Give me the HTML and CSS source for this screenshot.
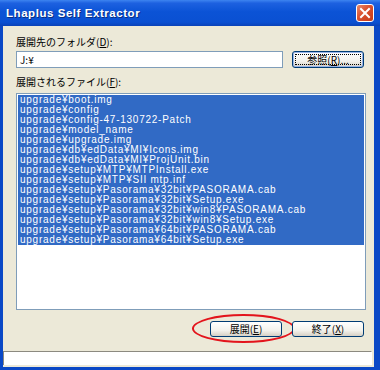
FILE: index.html
```
<!DOCTYPE html>
<html lang="ja">
<head>
    <meta charset="UTF-8">
    <title>Lhaplus Self Extractor</title>
    <link rel="stylesheet" href="styles.css">
</head>
<body>
    <div class="window">
        <div class="titlebar">
            <span class="title">Lhaplus Self Extractor</span>
            <div class="close">
                <svg width="12" height="12" viewBox="0 0 12 12">
                    <path d="M2 2 L10 10 M10 2 L2 10" stroke="#fff" stroke-width="2" stroke-linecap="square"/>
                </svg>
            </div>
        </div>
        <div class="client">
            <p class="label">展開先のフォルダ(<u>D</u>):</p>
            <div class="folder_row">
                <div class="textbox">J:¥</div>
                <div class="btn btn_default">参照(<u>R</u>)...</div>
            </div>
            <p class="label label2">展開されるファイル(<u>F</u>):</p>
            <div class="listbox">
                <ul>
                    <li>upgrade¥boot.img</li>
                    <li>upgrade¥config</li>
                    <li>upgrade¥config-47-130722-Patch</li>
                    <li>upgrade¥model_name</li>
                    <li>upgrade¥upgrade.img</li>
                    <li>upgrade¥db¥edData¥MI¥Icons.img</li>
                    <li>upgrade¥db¥edData¥MI¥ProjUnit.bin</li>
                    <li>upgrade¥setup¥MTP¥MTPInstall.exe</li>
                    <li>upgrade¥setup¥MTP¥SII mtp.inf</li>
                    <li>upgrade¥setup¥Pasorama¥32bit¥PASORAMA.cab</li>
                    <li>upgrade¥setup¥Pasorama¥32bit¥Setup.exe</li>
                    <li>upgrade¥setup¥Pasorama¥32bit¥win8¥PASORAMA.cab</li>
                    <li>upgrade¥setup¥Pasorama¥32bit¥win8¥Setup.exe</li>
                    <li>upgrade¥setup¥Pasorama¥64bit¥PASORAMA.cab</li>
                    <li>upgrade¥setup¥Pasorama¥64bit¥Setup.exe</li>
                </ul>
            </div>
            <div class="btn_row">
                <div class="btn btn_extract">展開(<u>E</u>)
                    <span class="mark"></span>
                </div>
                <div class="btn">終了(<u>X</u>)</div>
            </div>
            <div class="statusbar"></div>
        </div>
    </div>
</body>
</html>
```

FILE: styles.css
```
* {
    padding: 0;
    margin: 0;
    box-sizing: border-box;
}
body {
    width: 380px;
    height: 370px;
    overflow: hidden;
    font-family: "Noto Sans CJK JP", "Liberation Sans", sans-serif;
    font-size: 10px;
    color: #000;
}

.window {
    width: 380px;
    height: 370px;
    background: #0a48c6;
    display: flex;
    flex-direction: column;
}

.titlebar {
    height: 26px;
    display: flex;
    justify-content: space-between;
    align-items: center;
    padding: 0 6px 0 6px;
    background: linear-gradient(#3d84f0 0%, #1d61e0 12%, #0b53d6 45%, #0a50d2 85%, #0a42b8 100%);
}
.titlebar .title {
    font-family: "Liberation Sans", sans-serif;
    font-weight: bold;
    font-size: 11.5px;
    color: #fff;
    letter-spacing: 0.55px;
    text-shadow: 1px 1px 0 #0a2f80;
}
.titlebar .close {
    width: 18px;
    height: 18px;
    border: 1px solid #fff;
    border-radius: 3px;
    background: linear-gradient(135deg, #e88a6c 0%, #d9502e 45%, #c53a17 100%);
    display: flex;
    justify-content: center;
    align-items: center;
}

.client {
    flex: 1;
    margin: 0 6px 3px 3px;
    background: #ece9d8;
    padding: 0 8px 0 13px;
    display: flex;
    flex-direction: column;
}

.label {
    margin-top: 10px;
    height: 12px;
    line-height: 12px;
    font-size: 10px;
}
.label2 {
    margin-top: 8px;
}

.folder_row {
    margin-top: 3px;
    display: flex;
    height: 17px;
}
.textbox {
    width: 267px;
    height: 17px;
    background: #fff;
    border: 1px solid #7f9db9;
    padding-left: 3px;
    line-height: 15px;
    font-size: 10px;
}

.btn {
    width: 72px;
    height: 16px;
    border: 1px solid #003c74;
    border-radius: 3px;
    background: linear-gradient(#fff 0%, #f3f2ec 60%, #d6d0c5 100%);
    text-align: center;
    line-height: 14px;
    font-size: 10px;
    position: relative;
}
.btn_default {
    height: 17px;
    margin-left: 9px;
    line-height: 15px;
    box-shadow: inset 0 0 0 1px #98b4e8;
    outline: 1px dotted #000;
    outline-offset: -4px;
}

.listbox {
    margin-top: 5px;
    height: 217px;
    border: 1px solid #7f9db9;
    background: #fff;
    padding: 1px 1px 0 1px;
}
.listbox ul {
    list-style: none;
}
.listbox li {
    height: 10px;
    line-height: 10px;
    background: #316ac5;
    color: #fff;
    padding-left: 2px;
    font-family: "Liberation Sans", "Noto Sans CJK JP", sans-serif;
    font-size: 10px;
    letter-spacing: 0.75px;
    white-space: nowrap;
    overflow: hidden;
}

.btn_row {
    margin-top: 11px;
    display: flex;
    justify-content: flex-end;
    gap: 10px;
    padding-right: 2px;
}
.btn_extract .mark {
    position: absolute;
    left: -19px;
    top: -8px;
    width: 103px;
    height: 29px;
    border: 2px solid #e3141c;
    border-radius: 50%;
}

.statusbar {
    margin: 14px -6px 0 -13px;
    height: 14px;
    background: #fff;
    border-top: 1px solid #8c8a80;
    border-left: 1px solid #8c8a80;
    border-right: 1px solid #fff;
}
```
